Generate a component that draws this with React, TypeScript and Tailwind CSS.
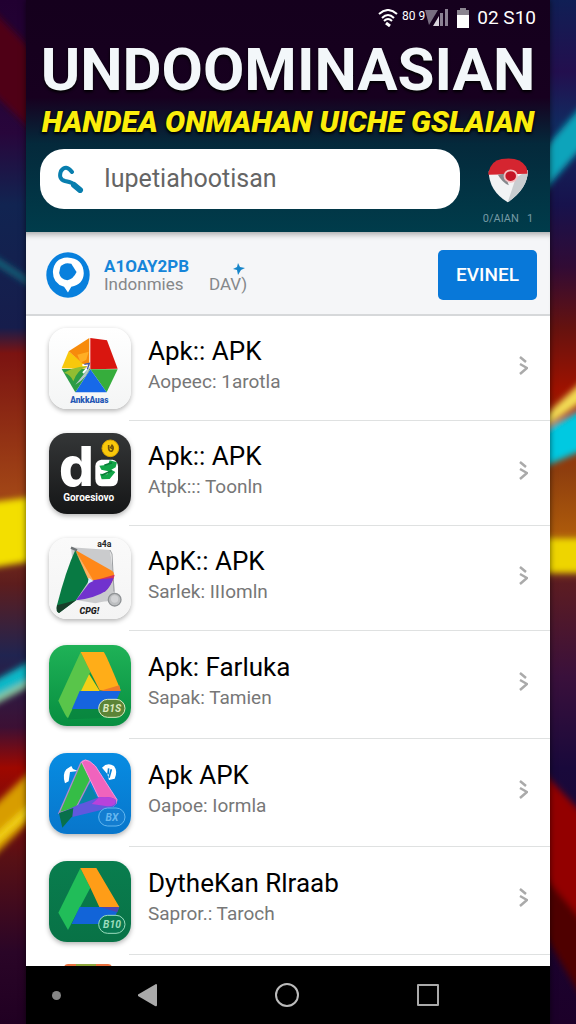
import type { ReactNode } from 'react';

type AppItem = {
  title: string;
  subtitle: string;
  height: string;
  icon: ReactNode;
};

function Tile({ id, from, to, top = 24, children }: { id: string; from: string; to: string; top?: number; children: ReactNode }) {
  return (
    <svg
      viewBox={`39 ${top} 246 243`}
      className="w-[82px] h-[81px] shrink-0 rounded-[18px] shadow-[0_2px_5px_rgba(0,0,0,0.3)]"
      fontFamily="Roboto, sans-serif"
      fontWeight="700"
      aria-hidden="true"
    >
      <defs>
        <linearGradient id={id} x1="0" y1="0" x2="0" y2="1">
          <stop offset="0" stopColor={from} />
          <stop offset="1" stopColor={to} />
        </linearGradient>
      </defs>
      <rect x="39" y={top} width="246" height="243" fill={`url(#${id})`} />
      {children}
    </svg>
  );
}

function Badge({ label, fill, stroke, y = 214 }: { label: string; fill: string; stroke: string; y?: number }) {
  return (
    <g>
      <rect x="188" y={y - 27} width="79" height="54" rx="27" fill={fill} stroke={stroke} strokeWidth="3" />
      <text x="228" y={y + 11} fontSize="31" fontStyle="italic" textAnchor="middle" fill={stroke}>
        {label}
      </text>
    </g>
  );
}

const apps: AppItem[] = [
  {
    title: 'Apk:: APK',
    subtitle: 'Aopeec: 1arotla',
    height: 'h-[105px]',
    icon: (
      <Tile id="t1" from="#ffffff" to="#f4f5f5">
        <path d="M163 54L213 61L245 146L163 148Z" fill="#d9160f" />
        <path d="M163 148H245L212 217Z" fill="#36ad3c" />
        <path d="M163 148L212 217H118Z" fill="#1769e8" />
        <path d="M77 147H163L118 217Z" fill="#2c9c46" />
        <path d="M77 145L98 94L163 147Z" fill="#f8c80c" />
        <path d="M98 94L160 54V148Z" fill="#f78b0b" />
        <path d="M124 104L158 95L151 119L134 128Z" fill="#ffae23" />
        <path d="M84 158Q105 164 112 184Q124 150 154 139Q131 140 108 146Z" fill="#91bd32" />
        <path d="M118 194Q158 171 162 139L144 145L153 151Z" fill="#b9c7c9" />
        <path d="M139 136Q154 132 158 140L141 159" fill="none" stroke="#fff" strokeWidth="6" />
        <path d="M145 133L160 130L154 148" fill="none" stroke="#4658a4" strokeWidth="4" />
        <text x="160" y="250" fontSize="25" fontWeight="900" textAnchor="middle" fill="#2456b4">AnkkAuas</text>
      </Tile>
    ),
  },
  {
    title: 'Apk:: APK',
    subtitle: 'Atpk::: Toonln',
    height: 'h-[105px]',
    icon: (
      <Tile id="t2" from="#343637" to="#151617">
        <text x="69" y="183" fontSize="164" fontWeight="800" fontFamily="Inter, sans-serif" fill="#fff">d</text>
        <path d="M196 104H230Q245 107 246 124V164Q244 184 223 184H197Q178 182 178 161V123Q179 106 196 104Z" fill="#fff" />
        <path d="M190 122L216 119L221 106L243 112L239 127L226 134L238 141L221 162L197 163L192 146L214 148L217 139L196 134Z" fill="#12a548" />
        <path d="M205 121L228 113M197 151L227 137" stroke="#087c36" strokeWidth="5" />
        <circle cx="223" cy="70" r="25" fill="#f9c80b" stroke="#dba600" strokeWidth="3" />
        <path d="M218 60V71Q220 81 228 78Q235 69 228 61L224 68L230 71" fill="none" stroke="#71530c" strokeWidth="5" />
        <text x="158" y="228" fontSize="30" textAnchor="middle" fill="#fff">Goroesiovo</text>
      </Tile>
    ),
  },
  {
    title: 'ApK:: APK',
    subtitle: 'Sarlek: IIIomln',
    height: 'h-[105px]',
    icon: (
      <Tile id="t3" from="#fafafa" to="#f4f4f4">
        <path d="M105 52L222 60L232 135L239 214Q220 210 178 220L120 210Z" fill="#cacbcd" />
        <path d="M222 60L228 72L234 185" fill="none" stroke="#9b9ea1" strokeWidth="3" />
        <path d="M118 60Q90 120 63 226Q59 246 69 249L120 211L164 145Z" fill="#087a43" />
        <path d="M63 226Q90 219 120 211L69 249Q59 246 63 226Z" fill="#173e29" />
        <path d="M118 60L229 123Q239 132 229 145L169 153Z" fill="#ff8819" />
        <path d="M169 153L236 134Q233 154 208 184L168 170Z" fill="#d4325a" />
        <path d="M166 151L232 144Q225 169 208 184Q176 205 120 211Z" fill="#7132ce" />
        <path d="M118 62L173 153L156 146Z" fill="#ffb060" />
        <path d="M158 143L172 153L155 161Z" fill="#d9eeff" />
        <circle cx="236" cy="209" r="19" fill="#bdbfc1" stroke="#8f9295" strokeWidth="4" />
        <circle cx="236" cy="207" r="11" fill="#d2d3d5" />
        <path d="M105 53L123 61" stroke="#6e7375" strokeWidth="7" />
        <text x="205" y="52" fontSize="26" textAnchor="middle" fill="#272727">a4a</text>
        <text x="160" y="251" fontSize="27" fontStyle="italic" fontWeight="900" textAnchor="middle" fill="#1d1d1d">CPG!</text>
      </Tile>
    ),
  },
  {
    title: 'Apk: Farluka',
    subtitle: 'Sapak: Tamien',
    height: 'h-[108px]',
    icon: (
      <Tile id="t4" from="#1fb257" to="#078e40">
        <path d="M160 106L96 247L194 243L236 209Z" fill="#087b3c" opacity=".5" />
        <path d="M155 104L191 162H131Z" fill="#f5cf17" />
        <path d="M134 45L163 104L96 243Q91 243 67 191Z" fill="#59c54a" />
        <path d="M134 45H203Q208 47 254 160H191L163 104Z" fill="#ffad18" />
        <path d="M191 162L250 145L254 162Z" fill="#ed7b2b" />
        <path d="M131 162H254L230 216H108Z" fill="#1664df" />
        <Badge label="B1S" fill="#5c8436" stroke="#dceac0" />
      </Tile>
    ),
  },
  {
    title: 'Apk APK',
    subtitle: 'Oapoe: Iormla',
    height: 'h-[108px]',
    icon: (
      <Tile id="t5" from="#078ce2" to="#0876cb" top={27}>
        <path d="M87 118Q78 91 91 76L106 66L111 75L126 81L102 84L98 112Z" fill="#fff" />
        <path d="M198 71Q214 54 234 66Q246 82 236 104L219 108L214 90Z" fill="#fff" />
        <path d="M218 73L216 91M226 76L219 101" stroke="#0783d7" strokeWidth="5" />
        <path d="M146 96L108 179L191 175Z" fill="#0785a6" />
        <path d="M134 57Q144 44 155 51L168 98L120 192L69 207Z" fill="#35bd46" stroke="#ae89d0" strokeWidth="4" />
        <path d="M137 54Q147 44 161 52L178 66L243 167Q244 179 232 187L188 160Z" fill="#f063bd" stroke="#f699dc" strokeWidth="3" />
        <path d="M69 209L120 185L189 160Q227 156 240 168Q247 186 220 192L109 219Z" fill="#6158dd" />
        <path d="M190 160Q227 156 239 168Q241 188 214 187L167 180Z" fill="#b742db" />
        <path d="M69 207L112 192L109 217L79 251Z" fill="#08704b" />
        <Badge label="BX" fill="#137dd0" stroke="#65b7ef" y={219} />
      </Tile>
    ),
  },
  {
    title: 'DytheKan Rlraab',
    subtitle: 'Sapror.: Taroch',
    height: 'h-[108px]',
    icon: (
      <Tile id="t6" from="#097d4e" to="#087246" top={33}>
        <path d="M133 54L163 113L96 240L67 188Z" fill="#21bd59" />
        <path d="M133 54H181L250 171H190L163 113Z" fill="#ff9d17" />
        <path d="M131 171H250L227 222H107Z" fill="#1264d8" />
        <path d="M193 171H250L244 187Z" fill="#5146b0" />
        <Badge label="B10" fill="#087951" stroke="#9bddbd" y={223} />
      </Tile>
    ),
  },
];

function Backdrop() {
  return (
    <svg viewBox="0 0 576 1024" preserveAspectRatio="none" className="absolute inset-0 size-full" aria-hidden="true">
      <defs>
        <linearGradient id="left" x1="0" y1="0" x2="0" y2="1">
          <stop offset="0" stopColor="#210031" />
          <stop offset=".13" stopColor="#28063b" />
          <stop offset=".2" stopColor="#112451" />
          <stop offset=".32" stopColor="#161d4c" />
          <stop offset=".345" stopColor="#7b1311" />
          <stop offset=".48" stopColor="#a14516" />
          <stop offset=".57" stopColor="#5d1d1d" />
          <stop offset=".64" stopColor="#202450" />
          <stop offset=".71" stopColor="#3c1034" />
          <stop offset=".75" stopColor="#9e0800" />
          <stop offset=".84" stopColor="#571015" />
          <stop offset=".93" stopColor="#2a0527" />
          <stop offset="1" stopColor="#200022" />
        </linearGradient>
        <linearGradient id="right" x1="0" y1="0" x2="0" y2="1">
          <stop offset="0" stopColor="#101f55" />
          <stop offset=".07" stopColor="#230f4e" />
          <stop offset=".12" stopColor="#112a60" />
          <stop offset=".2" stopColor="#17124c" />
          <stop offset=".26" stopColor="#310b35" />
          <stop offset=".32" stopColor="#65120f" />
          <stop offset=".38" stopColor="#9e1200" />
          <stop offset=".46" stopColor="#8e3e0e" />
          <stop offset=".52" stopColor="#ad5a0b" />
          <stop offset=".57" stopColor="#5c1c22" />
          <stop offset=".66" stopColor="#3a103b" />
          <stop offset=".75" stopColor="#19093b" />
          <stop offset="1" stopColor="#1c0029" />
        </linearGradient>
        <filter id="soft" x="-20%" y="-20%" width="140%" height="140%">
          <feGaussianBlur stdDeviation="3" />
        </filter>
      </defs>
      <rect width="288" height="1024" fill="url(#left)" />
      <rect x="288" width="288" height="1024" fill="url(#right)" />
      <g filter="url(#soft)">
        <path d="M-10 8L40 58V138L-10 90Z" fill="#500015" />
        <path d="M-10 253L40 286V292L-10 261Z" fill="#14677d" />
        <path d="M-10 502L40 496V560L-10 568Z" fill="#f3df00" />
        <path d="M-10 683L40 656V677L-10 703Z" fill="#09b8c7" />
        <path d="M-10 699L40 675V681L-10 707Z" fill="#8fcb9d" />
        <path d="M-10 810L40 762V811L-10 860Z" fill="#d89d05" />
        <path d="M-10 840L40 795V805L-10 850Z" fill="#f2d313" />
        <path d="M536 158L586 101V143L536 200Z" fill="#08a4bb" />
        <path d="M536 424L586 378V399L536 434Z" fill="#f3dd55" />
        <path d="M536 434L586 407V449L536 470Z" fill="#04c9e1" />
        <path d="M536 538H590V573H536Z" fill="#eed500" />
        <path d="M536 765L586 817V933L536 866Z" fill="#930000" />
        <path d="M536 866L586 925V1005L536 920Z" fill="#500006" />
      </g>
    </svg>
  );
}

function StatusBar() {
  return (
    <div className="flex h-[36px] items-center justify-end pr-[14px] text-white">
      <svg viewBox="0 0 20 18" className="w-[20px] h-[18px]" fill="none" stroke="currentColor" strokeWidth="2" aria-hidden="true">
        <path d="M1 5Q10-3 19 5M4 9Q10 3 16 9M6 12Q10 8 14 12" />
        <path d="M8 14L12 17" strokeWidth="3" />
      </svg>
      <span className="ml-[4px] text-[12px] leading-[14px] pb-[4px]">80 9</span>
      <svg viewBox="0 0 24 18" className="w-[24px] h-[18px]" aria-hidden="true">
        <path d="M0 1H13L4 16Z" fill="#776d80" />
        <path d="M8 17L14 7V17Z" fill="#d9d5dd" />
        <path d="M15 17V4H18V17ZM20 17V0H23V17Z" fill="#8b8193" />
      </svg>
      <svg viewBox="0 0 12 20" className="ml-[8px] w-[12px] h-[20px]" aria-hidden="true">
        <path d="M3 0H9V2H12V8H0V2H3Z" fill="#8b8590" />
        <path d="M0 7H12V20H0Z" fill="#fff" />
      </svg>
      <span className="ml-[8px] text-[19px] leading-[24px]">02 S10</span>
    </div>
  );
}

function Header() {
  return (
    <header className="shrink-0 bg-[linear-gradient(#15001d_0%,#17001f_42%,#04293b_62%,#003c4b_100%)] pb-[23px]">
      <StatusBar />
      <h1 className="text-center text-[60px] leading-[68px] font-bold whitespace-nowrap text-[#f3f7fa] [text-shadow:0_2px_3px_#000]">
        UNDOOMINASIAN
      </h1>
      <p className="text-center text-[30px] leading-[36px] font-black italic whitespace-nowrap text-[#fbed0c] [text-shadow:0_2px_3px_#000,0_0_2px_#000]">
        HANDEA ONMAHAN UICHE GSLAIAN
      </p>
      <div className="mt-[9px] flex h-[60px] pl-[14px] pr-[12px]">
        <label className="flex min-w-0 flex-1 items-center rounded-3xl bg-white pl-[18px]">
          <svg viewBox="0 0 26 28" className="w-[26px] h-[28px] shrink-0" fill="none" stroke="#087eae" aria-hidden="true">
            <path d="M14 7Q8-1 3 6Q0 14 7 16Q12 17 14 18" strokeWidth="4" strokeLinecap="round" />
            <path d="M16 20L22 25" strokeWidth="6" strokeLinecap="round" />
          </svg>
          <input
            type="text"
            aria-label="Search"
            defaultValue="Iupetiahootisan"
            className="ml-[20px] min-w-0 flex-1 bg-transparent text-[25px] leading-[32px] text-[#656565] outline-none"
          />
        </label>
        <div className="ml-[18px] flex w-[60px] shrink-0 flex-col items-center pt-[9px]">
          <svg viewBox="0 0 112 132" preserveAspectRatio="none" className="w-[41px] h-[45px] shrink-0" aria-hidden="true">
            <path d="M2 38Q2 96 54 130Q109 90 109 37L65 12Z" fill="#f2f3f4" />
            <path d="M54 130Q109 90 109 37L76 58Z" fill="#c9cdd0" />
            <path d="M1 43Q8 8 37 3Q87-5 104 26Q109 38 107 46L1 49Z" fill="#d52530" />
            <path d="M27 49L45 46L57 80Q39 72 27 49Z" fill="#85888c" />
            <circle cx="62" cy="53" r="17" fill="#c51525" stroke="#f4bfc1" strokeWidth="5" />
          </svg>
          <span className="mt-[9px] text-[11px] leading-[14px] whitespace-nowrap text-[#759aa5]">0/AIAN &nbsp; 1</span>
        </div>
      </div>
    </header>
  );
}

function Promo() {
  return (
    <section className="flex h-[84px] shrink-0 items-center border-b-2 border-[#d6d8da] bg-[#f5f6f8] pt-[4px] pl-[20px] pr-[13px] shadow-[inset_0_7px_6px_-5px_rgba(0,0,0,0.35)]">
      <svg viewBox="0 0 132 140" className="w-[44px] h-[46px]" aria-hidden="true">
        <ellipse cx="66" cy="70" rx="66" ry="69" fill="#0880dd" />
        <path d="M64 17Q112 19 114 65Q113 99 76 106L66 123L54 106Q20 96 20 61Q23 19 64 17Z" fill="#fff" />
        <path d="M43 45Q56 29 76 36L92 61Q82 83 64 86Q43 84 39 64Z" fill="#0880dd" />
      </svg>
      <div className="ml-[14px] w-[105px]">
        <p className="text-[17px] leading-[18px] font-bold text-[#1685d9]">A1OAY2PB</p>
        <p className="text-[17px] leading-[18px] text-[#858789]">Indonmies</p>
      </div>
      <div className="flex flex-col pt-[6px] text-[#85888b]">
        <svg viewBox="0 0 12 12" className="ml-[24px] w-[12px] h-[12px]" fill="#1685c9" aria-hidden="true">
          <path d="M5 0L7 4L12 5L8 7L5 12L4 7L0 6L4 4Z" />
        </svg>
        <span className="text-[17px] leading-[18px]">DAV)</span>
      </div>
      <button className="ml-auto h-[50px] w-[99px] rounded-[5px] bg-[#0878d9] text-[19px] font-medium text-white">EVINEL</button>
    </section>
  );
}

function AppRow({ app }: { app: AppItem }) {
  return (
    <li className={app.height}>
      <a href="#" className="flex h-full items-center pl-[23px]">
        {app.icon}
        <div className="ml-[-2px] flex h-full flex-1 items-center border-b border-[#dfe1e1] pb-[5px] pl-[19px] pr-[22px]">
          <div className="flex-1">
            <h2 className="text-[26px] leading-[32px] text-black">{app.title}</h2>
            <p className="text-[19px] leading-[30px] text-[#777]">{app.subtitle}</p>
          </div>
          <svg viewBox="0 0 9 20" className="w-[9px] h-[20px]" fill="none" stroke="#aaa" strokeWidth="2.5" aria-hidden="true">
            <path d="M1 1L7 6M1 8L8 12L1 18" />
          </svg>
        </div>
      </a>
    </li>
  );
}

function BottomNav() {
  return (
    <nav className="flex h-[58px] shrink-0 items-center bg-black pr-[52px]">
      <div className="w-[51px] pl-[26px]">
        <div className="size-[9px] rounded-full bg-[#858585]" />
      </div>
      <button aria-label="Back" className="flex flex-1 justify-center">
        <svg viewBox="0 0 20 24" className="w-[20px] h-[24px]" fill="#aaa">
          <path d="M1 11.500L19 1Q20 1 20 2V22Q20 24 18 23L1 13Z" />
        </svg>
      </button>
      <button aria-label="Home" className="flex flex-1 justify-center">
        <span className="size-[24px] rounded-full border-2 border-[#bbb]" />
      </button>
      <button aria-label="Recent apps" className="flex flex-1 justify-center">
        <span className="size-[22px] rounded-[1px] border-2 border-[#aaa]" />
      </button>
    </nav>
  );
}

export default function App() {
  return (
    <div className="relative h-screen overflow-hidden bg-[#210031] px-[26px] font-[Roboto,sans-serif]">
      <Backdrop />
      <div className="relative flex h-full flex-col shadow-[0_0_6px_rgba(0,0,0,0.6)]">
        <Header />
        <Promo />
        <main className="min-h-0 flex-1 overflow-hidden bg-white">
          <ul>
            {apps.map((app, i) => (
              <AppRow key={i} app={app} />
            ))}
          </ul>
          {/* Top edge of the next app's icon */}
          <div className="ml-[38px] mt-[9px] flex h-[40px] w-[48px] overflow-hidden rounded-t-sm">
            <div className="w-[12px] bg-[#e8713e]" />
            <div className="flex-1 bg-[#8fa63c]" />
            <div className="w-[16px] bg-[#e8713e]" />
          </div>
        </main>
        <BottomNav />
      </div>
    </div>
  );
}
